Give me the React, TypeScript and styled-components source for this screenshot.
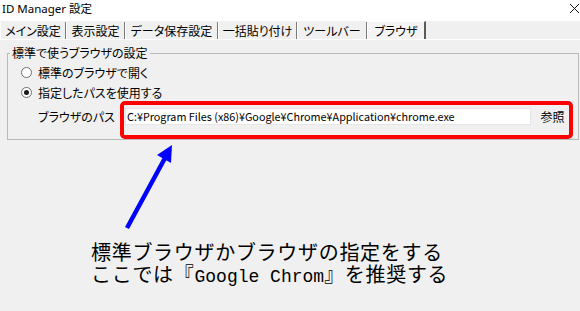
import * as React from 'react'
import styled, { createGlobalStyle } from 'styled-components'

const GlobalStyle = createGlobalStyle`
  html, body {
    margin: 0;
    padding: 0;
    background: #f0f0f0;
  }
  body {
    font-family: 'Noto Sans CJK JP', 'Noto Sans', sans-serif;
  }
`

const Window = styled.div`
  position: relative;
  width: 580px;
  height: 311px;
  overflow: hidden;
  background: #f0f0f0;
  color: #000;
`

const TitleBar = styled.div`
  height: 21px;
  background: #fff;
  display: flex;
  align-items: flex-start;
  justify-content: space-between;
  padding: 0 0 0 2px;
  box-sizing: border-box;
`

const Title = styled.span`
  font-family: 'Noto Sans', 'Noto Sans CJK JP', sans-serif;
  font-size: 11.5px;
  line-height: 17px;
`

const CloseIcon = styled.svg`
  margin-top: 3px;
`

const TabStrip = styled.div`
  height: 18px;
  display: flex;
  align-items: flex-end;
  font-size: 12px;
  font-feature-settings: 'palt';
`

const Tab = styled.div<{ $active?: boolean; $w: number }>`
  width: ${(p) => p.$w}px;
  height: ${(p) => (p.$active ? 18 : 17)}px;
  line-height: 17px;
  box-sizing: border-box;
  text-align: center;
  white-space: nowrap;
  border-left: 1px solid #fff;
  border-right: ${(p) => (p.$active ? '2px solid #5a5a5a' : '1px solid #7a7a7a')};
  border-top: ${(p) => (p.$active ? '1px solid #fff' : 'none')};
  background: ${(p) => (p.$active ? '#f4f4f4' : 'transparent')};
`

const Panel = styled.div`
  border-top: 1px solid #fff;
  padding: 6px 1px 0 7px;
  font-size: 12px;
  font-feature-settings: 'palt';
`

const GroupBox = styled.fieldset`
  margin: 0;
  padding: 2px 0 14px 2px;
  border: 1px solid #b9b9b9;
  min-width: 0;
`

const GroupLabel = styled.legend`
  padding: 0 2px;
  line-height: 14px;
  font-size: 12px;
`

const RadioRow = styled.label`
  display: flex;
  align-items: center;
  height: 20px;
  padding-left: 11px;
  gap: 6px;
`

const RadioMark = styled.span<{ $checked?: boolean }>`
  width: 9px;
  height: 9px;
  border-radius: 50%;
  border: 1px solid #6f6f6f;
  background: #fff;
  display: inline-flex;
  align-items: center;
  justify-content: center;
  &::after {
    content: '';
    width: 5px;
    height: 5px;
    border-radius: 50%;
    background: ${(p) => (p.$checked ? '#1a1a1a' : 'transparent')};
  }
`

const PathRow = styled.div`
  display: flex;
  align-items: center;
  margin-top: 6px;
  padding-left: 28px;
`

const PathLabel = styled.span`
  width: 87px;
`

const PathInput = styled.div`
  width: 406px;
  height: 17px;
  box-sizing: border-box;
  border: 1px solid #e6e6e6;
  background: #fff;
  padding-left: 1px;
  line-height: 15px;
  font-size: 10.8px;
  font-feature-settings: normal;
  white-space: nowrap;
  overflow: hidden;
`

const BrowseButton = styled.span`
  width: 39px;
  text-align: center;
  padding-left: 2px;
`

const Caption = styled.div`
  margin-top: 101px;
  padding-left: 91px;
  font-size: 20px;
  letter-spacing: 0.7px;
`

const CaptionLine = styled.div`
  height: 22px;
  line-height: 22px;
  white-space: nowrap;
`

const Mono = styled.span`
  font-family: 'Liberation Mono', 'Noto Sans CJK JP', monospace;
  font-size: 18px;
  letter-spacing: 0;
`

const Overlay = styled.svg`
  position: absolute;
  left: 0;
  top: 0;
  pointer-events: none;
`

const tabs = [
  { label: 'メイン設定', w: 66 },
  { label: '表示設定', w: 59 },
  { label: 'データ保存設定', w: 93 },
  { label: '一括貼り付け', w: 79 },
  { label: 'ツールバー', w: 70 },
  { label: 'ブラウザ', w: 59, active: true },
]

export default function App() {
  return (
    <Window>
      <GlobalStyle />
      <TitleBar>
        <Title>ID Manager 設定</Title>
        <CloseIcon width="11" height="11" viewBox="0 0 11 11">
          <path d="M1 1 L10 10 M10 1 L1 10" stroke="#111" strokeWidth="1" />
        </CloseIcon>
      </TitleBar>
      <TabStrip>
        {tabs.map((t) => (
          <Tab key={t.label} $w={t.w} $active={t.active}>
            {t.label}
          </Tab>
        ))}
      </TabStrip>
      <Panel>
        <GroupBox>
          <GroupLabel>標準で使うブラウザの設定</GroupLabel>
          <RadioRow>
            <RadioMark />
            標準のブラウザで開く
          </RadioRow>
          <RadioRow>
            <RadioMark $checked />
            指定したパスを使用する
          </RadioRow>
          <PathRow>
            <PathLabel>ブラウザのパス</PathLabel>
            <PathInput>C:¥Program Files (x86)¥Google¥Chrome¥Application¥chrome.exe</PathInput>
            <BrowseButton>参照</BrowseButton>
          </PathRow>
        </GroupBox>
      </Panel>
      <Caption>
        <CaptionLine>標準ブラウザかブラウザの指定をする</CaptionLine>
        <CaptionLine>
          ここでは『<Mono>Google Chrom</Mono>』を推奨する
        </CaptionLine>
      </Caption>
      <Overlay width="580" height="311" viewBox="0 0 580 311">
        <rect x="122" y="103" width="449" height="34" rx="3" fill="none" stroke="#ff0000" strokeWidth="4" />
        <line x1="127" y1="228" x2="165" y2="158" stroke="#0000ff" strokeWidth="4.5" />
        <polygon points="172,145 171,163 157,155" fill="#0000ff" />
      </Overlay>
    </Window>
  )
}
